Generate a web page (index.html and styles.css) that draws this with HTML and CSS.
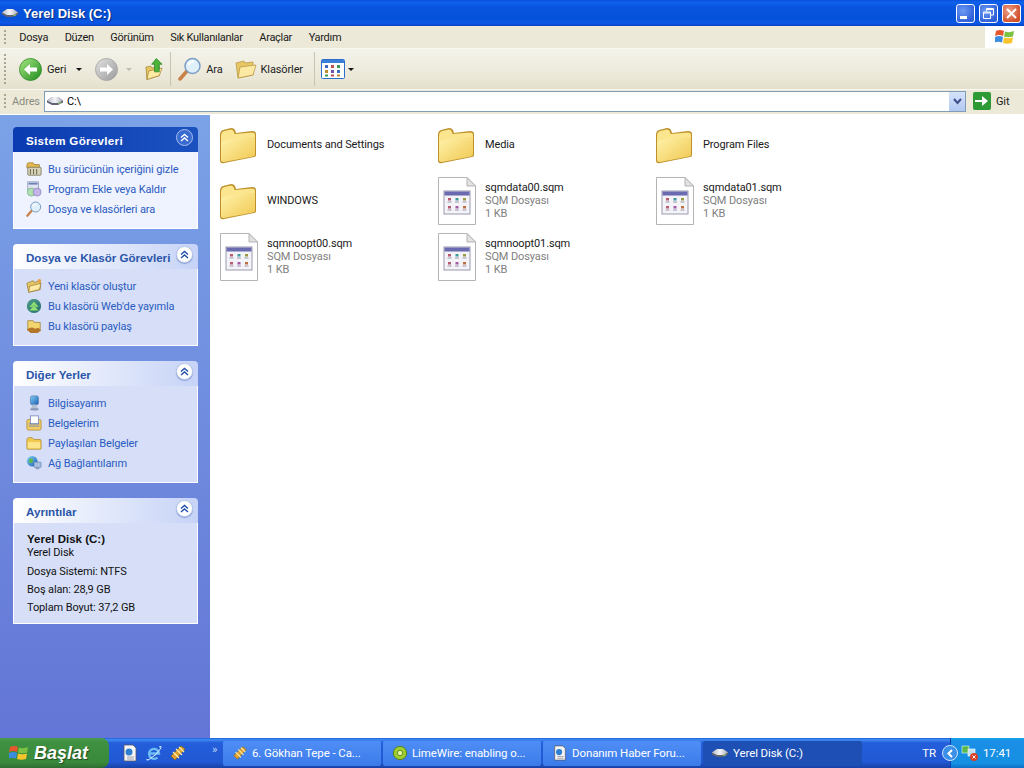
FILE: index.html
```html
<!DOCTYPE html>
<html lang="tr">
<head>
<meta charset="utf-8">
<title>Yerel Disk (C:)</title>
<link rel="stylesheet" href="styles.css">
</head>
<body>
<svg class="defs" width="0" height="0">
  <defs>
    <linearGradient id="gFolder" x1="0" y1="0" x2="1" y2="1"><stop offset="0" stop-color="#fff3ac"/><stop offset="1" stop-color="#f0c750"/></linearGradient>
    <linearGradient id="gBack" x1="0" y1="0" x2="1" y2="1"><stop offset="0" stop-color="#a8e882"/><stop offset="1" stop-color="#1f8a1c"/></linearGradient>
    <linearGradient id="gGray" x1="0" y1="0" x2="1" y2="1"><stop offset="0" stop-color="#e2e2e2"/><stop offset="1" stop-color="#9a9a9a"/></linearGradient>
    <linearGradient id="gDisk" x1="0" y1="0" x2="1" y2="0"><stop offset="0" stop-color="#b8bcc8"/><stop offset=".5" stop-color="#f4f4f8"/><stop offset="1" stop-color="#a8acb8"/></linearGradient>
    <linearGradient id="gGlobe" x1="0" y1="0" x2="1" y2="1"><stop offset="0" stop-color="#7fd0f5"/><stop offset="1" stop-color="#1c5fb5"/></linearGradient>

    <symbol id="folder" viewBox="0 0 38 38">
      <path d="M1 9 Q1 5 4 4 L12 2 Q15 2 16 4 L17 7 L33 5 Q37 5 37 8 L37 29 Q37 31 35 31 L5 37 Q1 38 1 34 Z" fill="#bd9028"/>
      <path d="M2 10 Q2 6 5 5 L12 3.500 Q14.500 3.500 15 6 L15.500 8 L33 6.500 Q36 6.500 36 9 L36 12 L2 16 Z" fill="#fbe58e"/>
      <path d="M2 16 Q12 11 36 11 L36 28.500 Q36 30 34 30.500 L5 36 Q2 36.500 2 34 Z" fill="url(#gFolder)"/>
    </symbol>
    <symbol id="doc" viewBox="0 0 38 48">
      <path d="M.5 .5 H29 L37.500 9 V47.500 H.5 Z" fill="#fff" stroke="#b4b4b4"/>
      <path d="M29 .5 V9 H37.500 Z" fill="#e2e2e2" stroke="#b4b4b4"/>
      <rect x="6" y="14" width="26" height="23" fill="#f3f3f8" stroke="#9a9ab0"/>
      <rect x="6.500" y="14.500" width="25" height="4" fill="#6a6ab0"/>
      <rect x="10" y="21" width="3" height="2.500" fill="#b85a70"/><rect x="17.500" y="21" width="3" height="2.500" fill="#3f9a9a"/><rect x="25" y="21" width="3" height="2.500" fill="#9a9a40"/>
      <rect x="10" y="29" width="3" height="2.500" fill="#b85a70"/><rect x="17.500" y="29" width="3" height="2.500" fill="#a85aa8"/><rect x="25" y="29" width="3" height="2.500" fill="#c07040"/>
      <rect x="9.500" y="24.500" width="4" height="1" fill="#9a9ab0"/><rect x="17" y="24.500" width="4" height="1" fill="#9a9ab0"/><rect x="24.500" y="24.500" width="4" height="1" fill="#9a9ab0"/>
      <rect x="9.500" y="32.500" width="4" height="1" fill="#9a9ab0"/><rect x="17" y="32.500" width="4" height="1" fill="#9a9ab0"/><rect x="24.500" y="32.500" width="4" height="1" fill="#9a9ab0"/>
    </symbol>
    <symbol id="disk" viewBox="0 0 16 16">
      <path d="M0 7.500 L5 4 H11 L16 7.500 V9.500 L11 12 H5 L0 9.500 Z" fill="#5f6472"/>
      <path d="M0 7.500 L5 4 H11 L16 7.500 L11 10 H5 Z" fill="url(#gDisk)"/>
      <rect x="11" y="9.500" width="3" height="1" fill="#9fe07c"/>
    </symbol>
    <symbol id="mag" viewBox="0 0 24 24">
      <path d="M2 22 L9 14" stroke="#c9824a" stroke-width="3.500" stroke-linecap="round"/>
      <circle cx="14.500" cy="9" r="7.500" fill="#dff0fb" stroke="#7b9ec4" stroke-width="1.500"/>
      <path d="M10 8 Q12 4.500 16 4.500" stroke="#fff" stroke-width="2" fill="none"/>
    </symbol>
    <symbol id="openfolder" viewBox="0 0 22 22">
      <path d="M1 5 L9 3 L10 5 L18 4 V17 L3 20 Z" fill="#e7c765" stroke="#b8913a" stroke-width=".7"/>
      <path d="M3 20 L5 9 L21 7 L18 17 Z" fill="#fbe9a4" stroke="#b8913a" stroke-width=".7"/>
    </symbol>
    <symbol id="flagicon" viewBox="0 0 20 20">
      <path d="M1 4 Q5 2 9 4 L8 9 Q4 7 0 9 Z" fill="#e5562d"/>
      <path d="M10 4.500 Q14 6 19 4 L18 9.500 Q13 11 9 9.500 Z" fill="#7cc142"/>
      <path d="M0 10 Q4 8 8 10 L7 15.500 Q3 14 -.5 15.500 Z" fill="#3b8de0"/>
      <path d="M9 10.500 Q13 12 18 10.500 L17 16 Q12 17.500 8 16 Z" fill="#f7c42c"/>
    </symbol>
    <symbol id="chev" viewBox="0 0 9 9">
      <path d="M1 4.500 L4.500 1.500 L8 4.500 M1 8 L4.500 5 L8 8" fill="none" stroke="currentColor" stroke-width="1.400"/>
    </symbol>
    <symbol id="mediafire" viewBox="0 0 18 18">
      <path d="M2 12 L12 2 L16 5 L6 16 Z" fill="#e0a030" stroke="#8a6a20" stroke-width=".8"/>
      <path d="M4 8 L10 14 M7 5 L13 11 M10 3 L15 8" stroke="#fff2b0" stroke-width="1.200"/>
    </symbol>
    <symbol id="ie" viewBox="0 0 18 18">
      <path d="M4 9.500 H14 A5 5 0 1 0 12.500 13.500" fill="none" stroke="#6fbdf5" stroke-width="2.400"/>
      <path d="M2 15 Q1 17 4 15.500 Q12 11 16 4 Q17 1.500 14 3" fill="none" stroke="#d8f0ff" stroke-width="1"/>
    </symbol>
    <symbol id="pagedoc" viewBox="0 0 18 18">
      <path d="M3 1 H12 L15 4 V17 H3 Z" fill="#f5f5f5" stroke="#556" stroke-width=".8"/>
      <circle cx="8" cy="8" r="3.500" fill="#2f7fd0"/>
      <path d="M6 13 H13 M6 15 H13" stroke="#889" stroke-width=".8"/>
    </symbol>
    <symbol id="lime" viewBox="0 0 18 18">
      <circle cx="9" cy="9" r="7.500" fill="#9fcc2e" stroke="#4f7a18"/>
      <circle cx="9" cy="9" r="3" fill="#e8f6a0" stroke="#5a8a20"/>
    </symbol>
    <symbol id="computer" viewBox="0 0 18 18">
      <rect x="5" y="1" width="9" height="10" rx="2" fill="url(#gGlobe)" stroke="#4a6fa8" stroke-width=".7"/>
      <path d="M7 11 L6 15 H13 L12 11 Z" fill="#b4c0d0"/>
      <ellipse cx="9.500" cy="16" rx="5" ry="1.500" fill="#8a9ab8"/>
    </symbol>
    <symbol id="docs" viewBox="0 0 18 18">
      <rect x="1" y="5" width="16" height="12" rx="2" fill="#f2cd62" stroke="#a8842c" stroke-width=".8"/>
      <rect x="5" y="1" width="9" height="9" fill="#fff" stroke="#6a7ab0" stroke-width=".8"/>
      <path d="M3 10 H15 M3 12.500 H15" stroke="#7085c0" stroke-width="1"/>
    </symbol>
    <symbol id="plain" viewBox="0 0 18 18">
      <path d="M1 6 Q1 3 3 3 H7 L9 5 H16 Q17 5 17 7 V15 Q17 16 16 16 H2 Q1 16 1 15 Z" fill="#f0c84e" stroke="#a8842c" stroke-width=".8"/>
      <path d="M2 8 H16 V15 H2 Z" fill="#fbe48a"/>
    </symbol>
    <symbol id="net" viewBox="0 0 18 18">
      <circle cx="7" cy="7" r="6" fill="url(#gGlobe)"/>
      <path d="M3 5 Q6 3 8 5 L7 9 L4 9 Z" fill="#5cb84a"/>
      <rect x="9" y="8" width="8" height="6" rx="1" fill="#a8c0e0" stroke="#4a6fa8" stroke-width=".6"/>
      <path d="M11 14 V16 H15 V14" fill="#8a9ab8"/>
    </symbol>
    <symbol id="hide" viewBox="0 0 18 18">
      <path d="M1 5 Q1 2 3 2 H8 L9 4 H15 V8 H1 Z" fill="#e5b94a" stroke="#8c6c20" stroke-width=".7"/>
      <rect x="2" y="7" width="15" height="9" rx="1" fill="#d7d2b8" stroke="#6c6a50" stroke-width=".8"/>
      <path d="M5 9 V15 M8.500 9 V15 M12 9 V15" stroke="#5a5a40"/>
    </symbol>
    <symbol id="addrem" viewBox="0 0 18 18">
      <rect x="2" y="1" width="12" height="9" fill="#dfe4f0" stroke="#7080a0" stroke-width=".7"/>
      <rect x="3" y="2" width="10" height="2" fill="#6a7fb5"/>
      <circle cx="6" cy="12.500" r="4.500" fill="#b0e0b0" stroke="#5a9a70" stroke-width=".6"/>
      <circle cx="12.500" cy="12.500" r="4.500" fill="#c4b5e8" stroke="#7a6ab0" stroke-width=".6"/>
    </symbol>
    <symbol id="newfolder" viewBox="0 0 18 18">
      <path d="M1 6 L8 3 L9 5 L16 3 V13 L3 16 Z" fill="#e7c765" stroke="#8c6c20" stroke-width=".7"/>
      <path d="M3 16 L4 9 L17 6 L15 13 Z" fill="#fbe9a4" stroke="#8c6c20" stroke-width=".7"/>
      <circle cx="15" cy="3" r="2" fill="#e8a040"/>
    </symbol>
    <symbol id="publish" viewBox="0 0 18 18">
      <circle cx="9" cy="9" r="8" fill="#2d7a3f"/>
      <circle cx="9" cy="9" r="8" fill="url(#gGlobe)" opacity=".4"/>
      <path d="M4 10 L9 4 L14 10 H11 L9 8 L7 10 Z M4 14 L9 8.500 L14 14 Z" fill="#8fe070"/>
    </symbol>
    <symbol id="share" viewBox="0 0 18 18">
      <path d="M2 3 H8 L9 5 H16 V14 H2 Z" fill="#f2d56d" stroke="#8c6c20" stroke-width=".7"/>
      <path d="M1 13 Q6 9 10 12 L14 11 L17 14 L13 17 H5 Z" fill="#b4762a"/>
    </symbol>
    <symbol id="netx" viewBox="0 0 18 18">
      <rect x="1" y="2" width="7" height="7" fill="#5cb84a" stroke="#dff" stroke-width=".6"/>
      <rect x="7" y="5" width="7" height="7" fill="#bfe0f5" stroke="#fff" stroke-width=".6"/>
      <circle cx="13" cy="13" r="4" fill="#d8402a"/>
      <path d="M11.500 11.500 L14.500 14.500 M14.500 11.500 L11.500 14.500" stroke="#fff"/>
    </symbol>
  </defs>
</svg>

<div class="window">
  <header class="titlebar">
    <svg class="title-icon"><use href="#disk"/></svg>
    <span class="title-text">Yerel Disk (C:)</span>
    <div class="controls">
      <button class="ctl ctl-blue" aria-label="Simge durumuna küçült"><svg width="19" height="19" viewBox="0 0 19 19"><rect x="4" y="12" width="7" height="3" fill="#fff"/></svg></button>
      <button class="ctl ctl-blue" aria-label="Önceki boyut"><svg width="19" height="19" viewBox="0 0 19 19"><path d="M7.500 7 V4.500 H14.500 V11 H12 M4.500 8 H11.500 V14.500 H4.500 Z M4.500 9 H11.500 M7.500 5.500 H14.500" fill="none" stroke="#fff"/></svg></button>
      <button class="ctl ctl-red" aria-label="Kapat"><svg width="19" height="19" viewBox="0 0 19 19"><path d="M5 5 L14 14 M14 5 L5 14" stroke="#fff" stroke-width="2"/></svg></button>
    </div>
  </header>

  <nav class="menubar">
    <i class="grip"></i>
    <ul class="menu">
      <li>Dosya</li><li>Düzen</li><li>Görünüm</li><li>Sık Kullanılanlar</li><li>Araçlar</li><li>Yardım</li>
    </ul>
    <div class="logo"><svg width="20" height="20"><use href="#flagicon"/></svg></div>
  </nav>

  <div class="toolbar">
    <i class="grip grip-tall"></i>
    <div class="tool t-back">
      <svg width="23" height="23" viewBox="0 0 23 23"><circle cx="11.500" cy="11.500" r="11" fill="url(#gBack)" stroke="#2f8a2a" stroke-width=".8"/><path d="M5 11.500 L11 6 V9.500 H18 V13.500 H11 V17 Z" fill="#fff"/></svg>
      <span>Geri</span><i class="caret t-caret"></i>
    </div>
    <div class="tool t-fwd">
      <svg width="23" height="23" viewBox="0 0 23 23"><circle cx="11.500" cy="11.500" r="11" fill="url(#gGray)" stroke="#a0a0a0" stroke-width=".8"/><path d="M18 11.500 L12 6 V9.500 H5 V13.500 H12 V17 Z" fill="#fff"/></svg>
      <i class="caret caret-off"></i>
    </div>
    <div class="tool t-up">
      <svg width="19" height="24" viewBox="0 0 20 24"><path d="M1 10 L6 9 L7 11 L15 9 V19 L2 23 Z" fill="#e7c765" stroke="#9a7a28" stroke-width=".7"/><path d="M2 23 L4 14 L18 11 L15 19 Z" fill="#fbe9a4" stroke="#9a7a28" stroke-width=".7"/><path d="M12 1 L18 7 H15 V15 H10 V7 H7 Z" fill="#4cb33a" stroke="#1f7a1c" stroke-width=".7"/></svg>
    </div>
    <i class="tsep"></i>
    <div class="tool t-search"><svg width="24" height="26"><use href="#mag"/></svg><span>Ara</span></div>
    <div class="tool t-folders"><svg width="22" height="22"><use href="#openfolder"/></svg><span>Klasörler</span></div>
    <i class="tsep tsep-2"></i>
    <div class="tool t-views">
      <svg width="24" height="20" viewBox="0 0 24 20"><rect x=".5" y=".5" width="23" height="19" rx="1" fill="#fff" stroke="#2a6fc9"/><rect x="1" y="1" width="22" height="3" fill="#3a80d8"/><rect x="4" y="6" width="3" height="3" fill="#3d6bc0"/><rect x="10" y="6" width="3" height="3" fill="#c05050"/><rect x="16" y="6" width="3" height="3" fill="#3c9a50"/><rect x="4" y="11" width="3" height="3" fill="#c08a30"/><rect x="10" y="11" width="3" height="3" fill="#7050b0"/><rect x="16" y="11" width="3" height="3" fill="#3d6bc0"/><rect x="4" y="15.500" width="3" height="2" fill="#3c9a50"/><rect x="10" y="15.500" width="3" height="2" fill="#c05050"/><rect x="16" y="15.500" width="3" height="2" fill="#c08a30"/></svg>
      <i class="caret"></i>
    </div>
  </div>

  <div class="addressbar">
    <i class="grip grip-addr"></i>
    <span class="addr-label">Adres</span>
    <div class="addr-field">
      <svg class="addr-icon"><use href="#disk"/></svg>
      <span class="addr-text">C:\</span>
      <span class="addr-drop"><svg width="9" height="7" viewBox="0 0 9 7"><path d="M1 1 L4.500 5 L8 1" fill="none" stroke="#3a4f8a" stroke-width="2"/></svg></span>
    </div>
    <div class="go">
      <svg width="18" height="18" viewBox="0 0 18 18"><rect width="18" height="18" rx="2" fill="#2e9a36"/><path d="M2 8 H9 V4 L15 9 L9 14 V10 H2 Z" fill="#fff"/></svg>
      <span>Git</span>
    </div>
  </div>

  <div class="main">
    <aside class="sidebar">
      <section class="panel panel-primary">
        <h2 class="panel-head"><span>Sistem Görevleri</span><b class="collapse"><svg width="9" height="9"><use href="#chev"/></svg></b></h2>
        <ul class="links">
          <li><svg><use href="#hide"/></svg>Bu sürücünün içeriğini gizle</li>
          <li><svg><use href="#addrem"/></svg>Program Ekle veya Kaldır</li>
          <li><svg><use href="#mag"/></svg>Dosya ve klasörleri ara</li>
        </ul>
      </section>
      <section class="panel">
        <h2 class="panel-head"><span>Dosya ve Klasör Görevleri</span><b class="collapse"><svg width="9" height="9"><use href="#chev"/></svg></b></h2>
        <ul class="links">
          <li><svg><use href="#newfolder"/></svg>Yeni klasör oluştur</li>
          <li><svg><use href="#publish"/></svg>Bu klasörü Web'de yayımla</li>
          <li><svg><use href="#share"/></svg>Bu klasörü paylaş</li>
        </ul>
      </section>
      <section class="panel">
        <h2 class="panel-head"><span>Diğer Yerler</span><b class="collapse"><svg width="9" height="9"><use href="#chev"/></svg></b></h2>
        <ul class="links">
          <li><svg><use href="#computer"/></svg>Bilgisayarım</li>
          <li><svg><use href="#docs"/></svg>Belgelerim</li>
          <li><svg><use href="#plain"/></svg>Paylaşılan Belgeler</li>
          <li><svg><use href="#net"/></svg>Ağ Bağlantılarım</li>
        </ul>
      </section>
      <section class="panel">
        <h2 class="panel-head"><span>Ayrıntılar</span><b class="collapse"><svg width="9" height="9"><use href="#chev"/></svg></b></h2>
        <div class="details">
          <strong>Yerel Disk (C:)</strong>
          <p class="d-type">Yerel Disk</p>
          <p class="d-first">Dosya Sistemi: NTFS</p>
          <p>Boş alan: 28,9 GB</p>
          <p>Toplam Boyut: 37,2 GB</p>
        </div>
      </section>
    </aside>

    <main class="files">
      <div class="file"><svg class="ico-folder"><use href="#folder"/></svg><div class="meta"><p>Documents and Settings</p></div></div>
      <div class="file"><svg class="ico-folder"><use href="#folder"/></svg><div class="meta"><p>Media</p></div></div>
      <div class="file"><svg class="ico-folder"><use href="#folder"/></svg><div class="meta"><p>Program Files</p></div></div>
      <div class="file"><svg class="ico-folder"><use href="#folder"/></svg><div class="meta"><p>WINDOWS</p></div></div>
      <div class="file"><svg class="ico-doc"><use href="#doc"/></svg><div class="meta"><p>sqmdata00.sqm</p><p class="sub">SQM Dosyası</p><p class="sub">1 KB</p></div></div>
      <div class="file"><svg class="ico-doc"><use href="#doc"/></svg><div class="meta"><p>sqmdata01.sqm</p><p class="sub">SQM Dosyası</p><p class="sub">1 KB</p></div></div>
      <div class="file"><svg class="ico-doc"><use href="#doc"/></svg><div class="meta"><p>sqmnoopt00.sqm</p><p class="sub">SQM Dosyası</p><p class="sub">1 KB</p></div></div>
      <div class="file"><svg class="ico-doc"><use href="#doc"/></svg><div class="meta"><p>sqmnoopt01.sqm</p><p class="sub">SQM Dosyası</p><p class="sub">1 KB</p></div></div>
    </main>
  </div>

  <footer class="taskbar">
    <button class="start"><svg width="20" height="20"><use href="#flagicon"/></svg><span>Başlat</span></button>
    <div class="quick">
      <svg width="18" height="18"><use href="#pagedoc"/></svg>
      <svg width="18" height="18"><use href="#ie"/></svg>
      <svg width="18" height="18"><use href="#mediafire"/></svg>
      <span class="more">»</span>
    </div>
    <div class="tasks">
      <div class="task"><svg width="16" height="16"><use href="#mediafire"/></svg><span>6. Gökhan Tepe - Ca...</span></div>
      <div class="task"><svg width="16" height="16"><use href="#lime"/></svg><span>LimeWire: enabling o...</span></div>
      <div class="task"><svg width="16" height="16"><use href="#pagedoc"/></svg><span>Donanım Haber Foru...</span></div>
      <div class="task task-active"><svg width="16" height="16"><use href="#disk"/></svg><span>Yerel Disk (C:)</span></div>
    </div>
    <span class="lang">TR</span>
    <div class="tray">
      <b class="tray-btn"><svg width="9" height="9" viewBox="0 0 9 9"><path d="M6 1 L2.500 4.500 L6 8" fill="none" stroke="#fff" stroke-width="2"/></svg></b>
      <svg width="18" height="18"><use href="#netx"/></svg>
      <span class="clock">17:41</span>
    </div>
  </footer>
</div>
</body>
</html>
```

FILE: styles.css
```css
* { box-sizing: border-box; }
html, body { margin: 0; padding: 0; height: 100%; overflow: hidden; }
body { font: 11px/13px Roboto, "Liberation Sans", Arial, sans-serif; letter-spacing: -.12px; color: #000; }
ul { list-style: none; margin: 0; padding: 0; }
p { margin: 0; }
button { border: 0; padding: 0; font: inherit; }
.defs { position: absolute; }
.window { width: 1024px; height: 768px; display: flex; flex-direction: column; background: #ece9d8; }

/* title bar */
.titlebar { height: 26px; flex: none; display: flex; align-items: center; padding: 0 3px 0 2px;
  background: linear-gradient(#0a4fd8 0, #0f62ee 8%, #0a55e0 25%, #0551d8 70%, #0a58e8 88%, #0342c4 100%); }
.title-icon { width: 16px; height: 16px; margin-right: 5px; }
.title-text { color: #fff; font: bold 13px/15px "Liberation Sans", Arial, sans-serif; letter-spacing: 0; text-shadow: 1px 1px 1px #0a2a80; }
.controls { margin-left: auto; display: flex; gap: 4px; }
.ctl { width: 19px; height: 19px; border: 1px solid #fff; border-radius: 3px; display: block; }
.ctl svg { display: block; margin: -1px; }
.ctl-blue { background: radial-gradient(circle at 35% 35%, #6d9bf5, #2e5fd8 75%); }
.ctl-red { background: radial-gradient(circle at 35% 35%, #f0a08a, #d0502a 75%); }

/* menu */
.menubar { height: 23px; flex: none; display: flex; align-items: center; background: #ece9d8; border-bottom: 1px solid #f8f7f0; padding-left: 4px; }
.grip { width: 2px; height: 15px; flex: none; background: repeating-linear-gradient(#a8a590 0 2px, transparent 2px 4px); }
.grip-tall { height: 30px; }
.menu { display: flex; margin-left: 5px; letter-spacing: -.3px; }
.menu li { padding: 0 8.300px; color: #1a1a1a; }
.logo { margin-left: auto; width: 39px; height: 22px; background: #fff; display: flex; align-items: center; justify-content: center; }

/* toolbar */
.toolbar { height: 41px; flex: none; display: flex; align-items: center; padding-left: 4px; background: linear-gradient(#f4f3ea, #ebe8d8 70%, #e4e0cd); border-bottom: 1px solid #f8f7f0; color: #222; }
.tool { display: flex; align-items: center; flex: none; }
.t-back { margin-left: 13px; }
.t-back span { margin-left: 5px; }
.t-caret { margin-left: 10px; }
.t-fwd { margin-left: 13px; }
.t-fwd .caret { margin-left: 8px; }
.t-up { margin-left: 13px; }
.tsep { width: 1px; height: 34px; background: #c8c5b2; margin-left: 6px; flex: none; }
.t-search { margin-left: 7px; }
.t-search span { margin-left: 4px; }
.t-folders { margin-left: 12px; }
.t-folders span { margin-left: 4px; }
.tsep-2 { margin-left: 11px; }
.t-views { margin-left: 6px; }
.t-views .caret { margin-left: 3px; }
.caret { width: 0; height: 0; border: 3px solid transparent; border-top: 3px solid #111; border-bottom: 0; display: block; }
.caret-off { border-top-color: #bdbbb0; }

/* address */
.addressbar { height: 25px; flex: none; display: flex; align-items: center; padding: 0 0 2px 4px; background: #ece9d8; border-bottom: 1px solid #fff; }
.grip-addr { height: 14px; }
.addr-label { margin-left: 6px; color: #8a8a80; width: 32px; }
.addr-field { width: 922px; height: 21px; flex: none; display: flex; align-items: center; background: #fff; border: 1px solid #7f9db9; padding-left: 2px; }
.addr-icon { width: 16px; height: 16px; }
.addr-text { margin-left: 4px; }
.addr-drop { margin-left: auto; width: 16px; height: 19px; background: linear-gradient(#d5e2fb, #b3c9f2); display: flex; align-items: center; justify-content: center; }
.go { display: flex; align-items: center; margin-left: 7px; color: #222; }
.go span { margin-left: 5px; }

/* main */
.main { flex: 1; min-height: 0; display: flex; background: #fff; }
.sidebar { width: 210px; flex: none; padding: 12px 12px 0 13px; background: linear-gradient(#7ba2e7, #6375d6); display: flex; flex-direction: column; gap: 15px; }
.panel-head { margin: 0; height: 25px; display: flex; align-items: center; justify-content: space-between; padding: 1px 5px 0 13px; border-radius: 4px 4px 0 0; font: bold 11.600px/13px "Liberation Sans", Arial, sans-serif; letter-spacing: 0; color: #2a55a8; background: linear-gradient(90deg, #fff, #c6d3f7); }
.panel-primary .panel-head { color: #fff; letter-spacing: .3px; background: linear-gradient(90deg, #0a3bb0, #1c52c0); }
.collapse { width: 17px; height: 17px; border-radius: 50%; background: #fff; border: 1px solid #b8c6e8; color: #1f4ea8; display: flex; align-items: center; justify-content: center; margin-top: -5px; box-shadow: 0 1px 1px #8a9fd5; }
.panel-primary .collapse { background: #3a6bd0; color: #fff; border-color: #a8c0f0; box-shadow: none; }
.links { background: #d6dff7; padding: 7px 0 9px 12px; border: 1px solid #fff; border-top: 0; color: #2a5bc0; }
.panel-primary .links { background: #eff3ff; }
.links li { height: 20px; display: flex; align-items: center; }
.links svg { width: 16px; height: 16px; margin-right: 6px; flex: none; }
.details { background: #d6dff7; height: 101px; padding: 10px 0 0 13px; border: 1px solid #fff; border-top: 0; color: #111; }
.details strong { display: block; font: bold 11.500px/13px "Liberation Sans", Arial, sans-serif; letter-spacing: 0; }
.details p { margin-top: 5px; }
.details .d-type { margin-top: 0; }
.details .d-first { margin-top: 6px; }

/* files */
.files { flex: 1; display: grid; grid-template-columns: repeat(3, 218px); grid-auto-rows: 56px; padding: 1px 0 0 9px; align-content: start; }
.file { display: flex; align-items: center; color: #1a1a1a; }
.ico-folder { width: 38px; height: 38px; margin: 2px 10px 0 0; flex: none; }
.ico-doc { width: 38px; height: 48px; margin: 2px 9px 0 1px; flex: none; }
.sub { color: #808080; }

/* taskbar */
.taskbar { height: 30px; flex: none; display: flex; align-items: center; background: linear-gradient(#1f5fd8 0, #3f8cf3 6%, #245edb 16%, #2158d3 80%, #1941a5 100%); color: #fff; font-size: 11.500px; letter-spacing: -.1px; }
.start { width: 109px; height: 30px; flex: none; display: flex; align-items: center; padding-left: 9px; color: #fff; font: italic bold 18px/20px "Liberation Sans", Arial, sans-serif; letter-spacing: 0; border-radius: 0 8px 8px 0; background: linear-gradient(#4b9a4f 0, #3f9040 15%, #3a8a3c 80%, #2c6e30); text-shadow: 1px 1px 1px #1f4a20; }
.start span { margin-left: 5px; }
.quick { width: 114px; flex: none; display: flex; align-items: center; padding-left: 12px; gap: 6px; }
.more { margin-left: 19px; color: #bcd3f7; margin-top: -8px; }
.tasks { display: flex; gap: 2px; flex: none; }
.task { width: 158px; height: 25px; display: flex; align-items: center; padding-left: 9px; border-radius: 2px; background: linear-gradient(#4f8ef5, #3b7bea); }
.task svg { margin-right: 4px; flex: none; }
.task-active { width: 159px; background: #1e4fb5; }
.task-active svg { margin-right: 5px; }
.lang { margin-left: auto; margin-right: 14px; }
.tray { width: 74px; height: 30px; flex: none; display: flex; align-items: center; background: linear-gradient(#12a6ea 0, #1a8ee5 10%, #1590e2 85%, #0f6fc5); border-left: 1px solid #1042af; gap: 3px; }
.tray-btn { width: 16px; height: 16px; margin-left: -9px; border-radius: 50%; background: #3a8fe8; border: 1px solid #cfe3fb; display: flex; align-items: center; justify-content: center; flex: none; }
.clock { margin-left: 1px; }
```
